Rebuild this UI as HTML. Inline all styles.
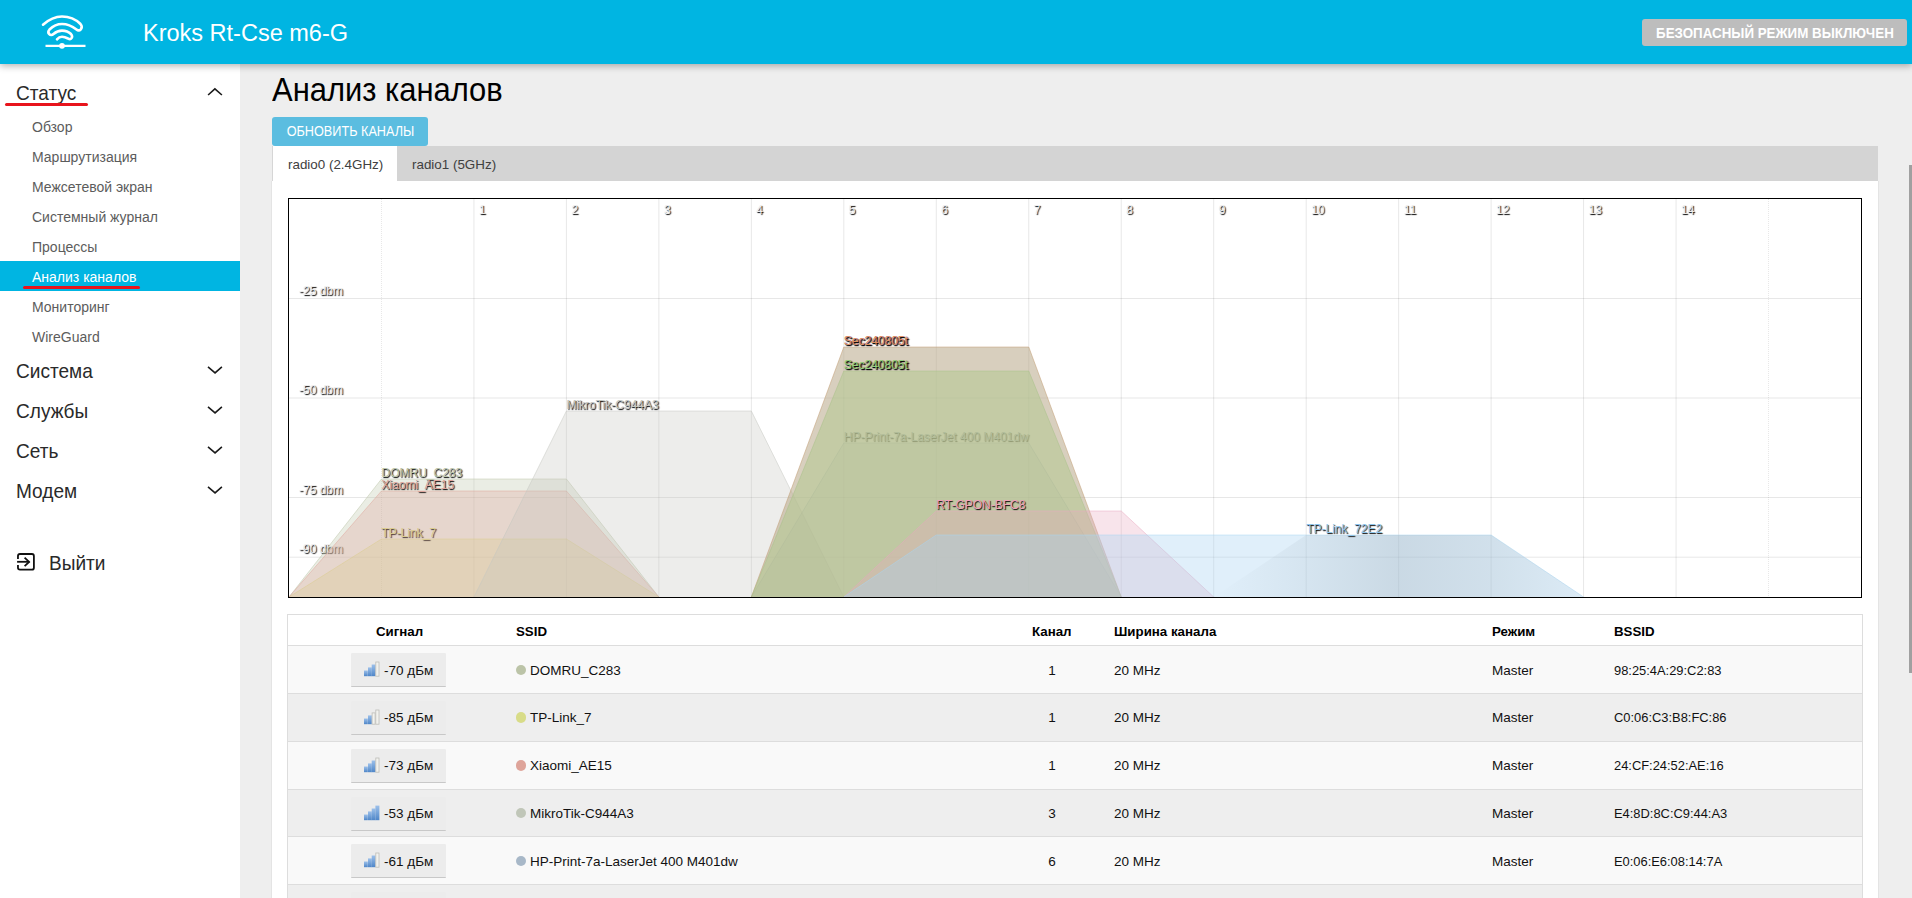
<!DOCTYPE html>
<html><head><meta charset="utf-8">
<style>
*{box-sizing:border-box;margin:0;padding:0}
html,body{width:1912px;height:898px;overflow:hidden;background:#eeeeee;font-family:"Liberation Sans",sans-serif;color:#333}
#hdr{position:absolute;left:0;top:0;width:1912px;height:64px;background:#00b5e2;z-index:5;box-shadow:0 2px 7px rgba(0,0,0,0.3)}
#hdr .title{position:absolute;left:143px;top:19px;font-size:23.5px;color:#fff;line-height:28px;white-space:nowrap}
#hdr .safe{position:absolute;left:1642px;top:19px;width:265px;height:27px;background:#bdbdbd;border-radius:3px;color:#fff;font-weight:bold;font-size:14.6px;line-height:28.5px;text-align:center;white-space:nowrap}
#hdr .safe span{display:inline-block;transform:scaleX(0.915);transform-origin:50% 50%}
#side{position:absolute;left:0;top:0;width:240px;height:898px;background:#fff}
.sec{position:absolute;left:16px;font-size:20.3px;color:#2a2a2a;line-height:22px;white-space:nowrap;transform:scaleX(0.94);transform-origin:0 0}
.sub{position:absolute;left:32px;font-size:14px;color:#5c5c5c;line-height:16px;white-space:nowrap}
.act{position:absolute;left:0;top:261px;width:240px;height:30px;background:#00b5e2}
.redline{position:absolute;height:3px;background:#e8141c;border-radius:2px}
.chev{position:absolute;left:206px}
#main{position:absolute;left:240px;top:64px;width:1672px;height:834px}
h2{position:absolute;left:272px;top:71.7px;font-size:32.4px;font-weight:normal;color:#000;line-height:36px;white-space:nowrap;transform:scaleX(0.955);transform-origin:0 0}
.btn{position:absolute;left:272px;top:117px;width:156px;height:29px;background:#5bbde0;border-radius:3px;color:#fff;font-size:14px;line-height:29px;text-align:center;white-space:nowrap}
.btn span{display:inline-block;transform:scaleX(0.905)}
.tabs{position:absolute;left:272px;top:146px;width:1606px;height:35px;background:#d4d4d4}
.tab{position:absolute;top:0;height:35px;font-size:13.4px;line-height:37px;color:#404040;white-space:nowrap}
.panel{position:absolute;left:271px;top:181px;width:1608px;height:717px;background:#fff;border-left:1px solid #e4e4e4;border-right:1px solid #e4e4e4}
#scroll{position:absolute;left:1909px;top:165px;width:3px;height:508px;background:#a0a0a0}

#cbox{position:absolute;left:288px;top:198px;width:1574px;height:400px;border:1px solid #000;background:#fff}
#chart{position:absolute;left:0;top:0}
.gl{fill:#eee;font-size:12px;font-family:"Liberation Sans",sans-serif;text-shadow:1px 1px 1px #000}
.lb{font-size:12px;font-family:"Liberation Sans",sans-serif;text-shadow:1px 1px 1px #000}

#tbl{position:absolute;left:287px;top:614px;width:1576px;height:400px;border:1px solid #dddddd;border-bottom:none;background:#fff;overflow:hidden}
.th{position:absolute;top:9px;font-size:13.3px;font-weight:bold;color:#000;line-height:16px;white-space:nowrap}
.tr{position:absolute;left:0;width:1574px;height:47.88px;border-top:1px solid #dddddd}
.td{position:absolute;top:16.5px;font-size:13.5px;color:#111;line-height:16px;white-space:nowrap}
.badge{position:absolute;left:63px;top:7px;width:95px;height:34px;background:#ececec;border-bottom:1.5px solid #c8c8c8;border-radius:1px}
.ico{position:absolute;left:12px;top:8px}
.sv{position:absolute;left:33px;top:9.5px;font-size:13.5px;color:#111;line-height:16px;white-space:nowrap}
.dot{position:absolute;left:228px;top:18.5px;width:10.4px;height:10.4px;border-radius:50%}
</style></head><body>
<div id="hdr">
  <svg style="position:absolute;left:0;top:0" width="100" height="64" viewBox="0 0 100 64">
    <g fill="none" stroke="#fff" stroke-width="2.6" stroke-linecap="round" stroke-linejoin="round">
      <path d="M43,24.7 C50,18.5 56,16.5 62,16.5 C70,16.5 76,19.5 80.5,24 C83.5,27.5 80,32.5 76.5,29.5 C72,26 67,24 62,24 C56.5,24 52.5,26.5 49.5,29.5 C46.5,33 50.5,37 53.5,34 C56,31.8 59,30.6 62,30.6 C66,30.6 69,32 71,34 C73.5,37 71,40.5 68,38.5 C66,37.5 64,36.8 62,36.8 C60,36.8 58.5,37.5 57,39.3"/>
      <path d="M45.5,45.8 H85.5" stroke-width="2.2" stroke-linecap="butt"/>
    </g>
    <circle cx="62" cy="45.8" r="2.9" fill="#fff"/>
  </svg>
  <div class="title">Kroks Rt-Cse m6-G</div>
  <div class="safe"><span>БЕЗОПАСНЫЙ РЕЖИМ ВЫКЛЮЧЕН</span></div>
</div>
<div id="side">
<div class="act"></div>
<div class="sec" style="top:81.67px">Статус</div>
<div class="sub" style="top:119.0px">Обзор</div>
<div class="sub" style="top:149.0px">Маршрутизация</div>
<div class="sub" style="top:179.0px">Межсетевой экран</div>
<div class="sub" style="top:209.0px">Системный журнал</div>
<div class="sub" style="top:239.0px">Процессы</div>
<div class="sub" style="top:269.0px;color:#fff">Анализ каналов</div>
<div class="sub" style="top:299.0px">Мониторинг</div>
<div class="sub" style="top:329.0px">WireGuard</div>
<div class="sec" style="top:359.97px">Система</div>
<svg class="chev" style="top:364.9px" width="18" height="11" viewBox="0 0 18 11"><path d="M2,1.9 L9.05,7.9 L15.9,1.9" fill="none" stroke="#1a1a1a" stroke-width="1.6"/></svg>
<div class="sec" style="top:399.97px">Службы</div>
<svg class="chev" style="top:404.9px" width="18" height="11" viewBox="0 0 18 11"><path d="M2,1.9 L9.05,7.9 L15.9,1.9" fill="none" stroke="#1a1a1a" stroke-width="1.6"/></svg>
<div class="sec" style="top:439.97px">Сеть</div>
<svg class="chev" style="top:444.9px" width="18" height="11" viewBox="0 0 18 11"><path d="M2,1.9 L9.05,7.9 L15.9,1.9" fill="none" stroke="#1a1a1a" stroke-width="1.6"/></svg>
<div class="sec" style="top:479.97px">Модем</div>
<svg class="chev" style="top:484.9px" width="18" height="11" viewBox="0 0 18 11"><path d="M2,1.9 L9.05,7.9 L15.9,1.9" fill="none" stroke="#1a1a1a" stroke-width="1.6"/></svg>
<svg class="chev" style="top:87px" width="18" height="11" viewBox="0 0 18 11"><path d="M2.1,8 L8.9,1.9 L15.9,8" fill="none" stroke="#1a1a1a" stroke-width="1.6"/></svg>
<div class="redline" style="left:5px;top:103px;width:83px"></div>
<div class="redline" style="left:23px;top:286px;width:117px"></div>
<svg style="position:absolute;left:16px;top:552px" width="20" height="20" viewBox="0 0 20 20"><g fill="none" stroke="#111" stroke-width="1.8"><path d="M1.96,6.9 V4 Q1.96,2 3.96,2 H15.9 Q17.9,2 17.9,4 V15.7 Q17.9,17.7 15.9,17.7 H3.96 Q1.96,17.7 1.96,15.7 V13.1"/><path d="M1.1,9.8 H13.4"/><path d="M8.6,5.6 L13.1,9.9 L8.6,14.2"/></g></svg>
<div class="sec" style="left:49px;top:551.77px">Выйти</div>
</div>
<h2>Анализ каналов</h2>
<div class="btn"><span>ОБНОВИТЬ КАНАЛЫ</span></div>
<div class="tabs">
  <div class="tab" style="left:0;width:125px;background:#fff;padding-left:15px;border-left:1px solid #d6d6d6">radio0 (2.4GHz)</div>
  <div class="tab" style="left:140px">radio1 (5GHz)</div>
</div>
<div class="panel"></div>
<div id="cbox"><svg id="chart" width="1572" height="398" viewBox="0 0 1572 398">
<g stroke="#000" stroke-width="0.1" shape-rendering="auto">
<line x1="0" y1="99.5" x2="1572" y2="99.5"/>
<line x1="0" y1="199" x2="1572" y2="199"/>
<line x1="0" y1="298.5" x2="1572" y2="298.5"/>
<line x1="0" y1="358.2" x2="1572" y2="358.2"/>
<line x1="92.47" y1="0" x2="92.47" y2="398" stroke-dasharray="1,1"/>
<line x1="184.94" y1="0" x2="184.94" y2="398"/>
<line x1="277.41" y1="0" x2="277.41" y2="398"/>
<line x1="369.88" y1="0" x2="369.88" y2="398"/>
<line x1="462.35" y1="0" x2="462.35" y2="398"/>
<line x1="554.82" y1="0" x2="554.82" y2="398"/>
<line x1="647.29" y1="0" x2="647.29" y2="398"/>
<line x1="739.76" y1="0" x2="739.76" y2="398"/>
<line x1="832.24" y1="0" x2="832.24" y2="398"/>
<line x1="924.71" y1="0" x2="924.71" y2="398"/>
<line x1="1017.18" y1="0" x2="1017.18" y2="398"/>
<line x1="1109.65" y1="0" x2="1109.65" y2="398"/>
<line x1="1202.12" y1="0" x2="1202.12" y2="398"/>
<line x1="1294.59" y1="0" x2="1294.59" y2="398"/>
<line x1="1387.06" y1="0" x2="1387.06" y2="398"/>
<line x1="1479.53" y1="0" x2="1479.53" y2="398" stroke-dasharray="1,1"/>
</g>
<text x="10" y="95.5" class="gl">-25 dbm</text>
<text x="10" y="195" class="gl">-50 dbm</text>
<text x="10" y="294.5" class="gl">-75 dbm</text>
<text x="10" y="354" class="gl">-90 dbm</text>
<text x="189.94" y="15" class="gl">1</text>
<text x="282.41" y="15" class="gl">2</text>
<text x="374.88" y="15" class="gl">3</text>
<text x="467.35" y="15" class="gl">4</text>
<text x="559.82" y="15" class="gl">5</text>
<text x="652.29" y="15" class="gl">6</text>
<text x="744.76" y="15" class="gl">7</text>
<text x="837.24" y="15" class="gl">8</text>
<text x="929.71" y="15" class="gl">9</text>
<text x="1022.18" y="15" class="gl">10</text>
<text x="1114.65" y="15" class="gl">11</text>
<text x="1207.12" y="15" class="gl">12</text>
<text x="1299.59" y="15" class="gl">13</text>
<text x="1392.06" y="15" class="gl">14</text>
<g>
<polyline points="0.00,398.00 92.47,280.00 277.41,280.00 369.88,398.00" style="fill:#bcc4a8;fill-opacity:0.31;stroke:#bcc4a8;stroke-width:0.5"/>
<text x="92.47" y="278.00" class="lb" style="fill:#bcc4a8">DOMRU_C283</text>
</g>
<g>
<polyline points="0.00,398.00 92.47,340.00 277.41,340.00 369.88,398.00" style="fill:#d8dc88;fill-opacity:0.31;stroke:#d8dc88;stroke-width:0.5"/>
<text x="92.47" y="338.00" class="lb" style="fill:#d8dc88">TP-Link_7</text>
</g>
<g>
<polyline points="0.00,398.00 92.47,292.00 277.41,292.00 369.88,398.00" style="fill:#dea49a;fill-opacity:0.31;stroke:#dea49a;stroke-width:0.5"/>
<text x="92.47" y="290.00" class="lb" style="fill:#dea49a">Xiaomi_AE15</text>
</g>
<g>
<polyline points="184.94,398.00 277.41,212.00 462.35,212.00 554.82,398.00" style="fill:#c4c6c0;fill-opacity:0.31;stroke:#c4c6c0;stroke-width:0.5"/>
<text x="277.41" y="210.00" class="lb" style="fill:#c4c6c0">MikroTik-C944A3</text>
</g>
<g>
<polyline points="462.35,398.00 554.82,244.00 739.76,244.00 832.24,398.00" style="fill:#a8b8c8;fill-opacity:0.25;stroke:#a8b8c8;stroke-width:0.5"/>
<text x="554.82" y="242.00" class="lb" style="fill:#a8b8c8">HP-Print-7a-LaserJet 400 M401dw</text>
</g>
<g>
<polyline points="462.35,398.00 554.82,148.00 739.76,148.00 832.24,398.00" style="fill:#b8a888;fill-opacity:0.55;stroke:#c09a70;stroke-width:0.5"/>
<text transform="translate(0.7,0)" x="554.82" y="146.00" class="lb" style="fill:#b080c0;opacity:0.9">Sec240805t</text>
<text x="554.82" y="146.00" class="lb" style="fill:#e09060">Sec240805t</text>
</g>
<g>
<polyline points="462.35,398.00 554.82,172.00 739.76,172.00 832.24,398.00" style="fill:#b2c890;fill-opacity:0.53;stroke:#a8c088;stroke-width:0.5"/>
<text transform="translate(0.7,0)" x="554.82" y="170.00" class="lb" style="fill:#c8b060;opacity:0.9">Sec240805t</text>
<text x="554.82" y="170.00" class="lb" style="fill:#90d080">Sec240805t</text>
</g>
<g>
<polyline points="554.82,398.00 647.29,312.00 832.24,312.00 924.71,398.00" style="fill:#e8a8c0;fill-opacity:0.31;stroke:#e8a8c0;stroke-width:0.5"/>
<text x="647.29" y="310.00" class="lb" style="fill:#f0a0b8">RT-GPON-BFC8</text>
</g>
<g>
<polyline points="554.82,398.00 647.29,336.00 1202.12,336.00 1294.59,398.00" style="fill:#a8d4f0;fill-opacity:0.36;stroke:#a8d4f0;stroke-width:0.5"/>
</g>
<defs><linearGradient id="g72" gradientUnits="userSpaceOnUse" x1="924.71" y1="0" x2="1294.59" y2="0"><stop offset="0" stop-color="#9aaab6" stop-opacity="0"/><stop offset="0.2" stop-color="#9aaab6" stop-opacity="0.12"/><stop offset="0.5" stop-color="#9aaab6" stop-opacity="0.32"/><stop offset="0.75" stop-color="#9aaab6" stop-opacity="0.22"/><stop offset="1" stop-color="#9aaab6" stop-opacity="0.06"/></linearGradient></defs>
<polyline points="924.71,398.00 1017.18,336.00 1202.12,336.00 1294.59,398.00" style="fill:url(#g72);stroke:none"/>
<text x="1017.18" y="334.00" class="lb" style="fill:#8cc4ec">TP-Link_72E2</text>
</svg></div>
<svg width="0" height="0" style="position:absolute"><defs><linearGradient id="gb" x1="0" y1="0" x2="0" y2="1"><stop offset="0" stop-color="#9cc0ea"/><stop offset="1" stop-color="#4f86c8"/></linearGradient></defs></svg>
<div id="tbl">
<div class="th" style="left:88px;width:46px;text-align:center">Сигнал</div>
<div class="th" style="left:228px">SSID</div>
<div class="th" style="left:744px">Канал</div>
<div class="th" style="left:826px">Ширина канала</div>
<div class="th" style="left:1204px">Режим</div>
<div class="th" style="left:1326px">BSSID</div>
<div class="tr" style="top:30.00px;background:#f9f9f9">
<div class="badge"><svg class="ico" width="17" height="16" viewBox="0 0 17 16"><rect x="1" y="9.5" width="3.8" height="5.7" fill="url(#gb)"/><rect x="5" y="6.4" width="3.8" height="8.8" fill="url(#gb)"/><rect x="8.7" y="3.5" width="3.8" height="11.7" fill="url(#gb)"/><rect x="12.8" y="1.0" width="3.2" height="14.2" fill="#f2f2ee" stroke="#bdbdb8" stroke-width="0.8"/></svg><span class="sv">-70 дБм</span></div>
<span class="dot" style="background:#bcc4a8"></span>
<div class="td" style="left:242px">DOMRU_C283</div>
<div class="td" style="left:744px;width:40px;text-align:center">1</div>
<div class="td" style="left:826px">20 MHz</div>
<div class="td" style="left:1204px">Master</div>
<div class="td" style="left:1326px;font-size:12.9px">98:25:4A:29:C2:83</div>
</div>
<div class="tr" style="top:77.86px;background:#eeeeee">
<div class="badge"><svg class="ico" width="17" height="16" viewBox="0 0 17 16"><rect x="1" y="9.5" width="3.8" height="5.7" fill="url(#gb)"/><rect x="5" y="6.4" width="3.8" height="8.8" fill="url(#gb)"/><rect x="9.1" y="3.9" width="3.0" height="11.3" fill="#f2f2ee" stroke="#bdbdb8" stroke-width="0.8"/><rect x="12.8" y="1.0" width="3.2" height="14.2" fill="#f2f2ee" stroke="#bdbdb8" stroke-width="0.8"/></svg><span class="sv">-85 дБм</span></div>
<span class="dot" style="background:#d8dc88"></span>
<div class="td" style="left:242px">TP-Link_7</div>
<div class="td" style="left:744px;width:40px;text-align:center">1</div>
<div class="td" style="left:826px">20 MHz</div>
<div class="td" style="left:1204px">Master</div>
<div class="td" style="left:1326px;font-size:12.9px">C0:06:C3:B8:FC:86</div>
</div>
<div class="tr" style="top:125.72px;background:#f9f9f9">
<div class="badge"><svg class="ico" width="17" height="16" viewBox="0 0 17 16"><rect x="1" y="9.5" width="3.8" height="5.7" fill="url(#gb)"/><rect x="5" y="6.4" width="3.8" height="8.8" fill="url(#gb)"/><rect x="8.7" y="3.5" width="3.8" height="11.7" fill="url(#gb)"/><rect x="12.8" y="1.0" width="3.2" height="14.2" fill="#f2f2ee" stroke="#bdbdb8" stroke-width="0.8"/></svg><span class="sv">-73 дБм</span></div>
<span class="dot" style="background:#dea49a"></span>
<div class="td" style="left:242px">Xiaomi_AE15</div>
<div class="td" style="left:744px;width:40px;text-align:center">1</div>
<div class="td" style="left:826px">20 MHz</div>
<div class="td" style="left:1204px">Master</div>
<div class="td" style="left:1326px;font-size:12.9px">24:CF:24:52:AE:16</div>
</div>
<div class="tr" style="top:173.58px;background:#eeeeee">
<div class="badge"><svg class="ico" width="17" height="16" viewBox="0 0 17 16"><rect x="1" y="9.5" width="3.8" height="5.7" fill="url(#gb)"/><rect x="5" y="6.4" width="3.8" height="8.8" fill="url(#gb)"/><rect x="8.7" y="3.5" width="3.8" height="11.7" fill="url(#gb)"/><rect x="12.4" y="0.6" width="4.0" height="14.6" fill="url(#gb)"/></svg><span class="sv">-53 дБм</span></div>
<span class="dot" style="background:#c0c6b8"></span>
<div class="td" style="left:242px">MikroTik-C944A3</div>
<div class="td" style="left:744px;width:40px;text-align:center">3</div>
<div class="td" style="left:826px">20 MHz</div>
<div class="td" style="left:1204px">Master</div>
<div class="td" style="left:1326px;font-size:12.9px">E4:8D:8C:C9:44:A3</div>
</div>
<div class="tr" style="top:221.44px;background:#f9f9f9">
<div class="badge"><svg class="ico" width="17" height="16" viewBox="0 0 17 16"><rect x="1" y="9.5" width="3.8" height="5.7" fill="url(#gb)"/><rect x="5" y="6.4" width="3.8" height="8.8" fill="url(#gb)"/><rect x="8.7" y="3.5" width="3.8" height="11.7" fill="url(#gb)"/><rect x="12.8" y="1.0" width="3.2" height="14.2" fill="#f2f2ee" stroke="#bdbdb8" stroke-width="0.8"/></svg><span class="sv">-61 дБм</span></div>
<span class="dot" style="background:#a8b8c8"></span>
<div class="td" style="left:242px">HP-Print-7a-LaserJet 400 M401dw</div>
<div class="td" style="left:744px;width:40px;text-align:center">6</div>
<div class="td" style="left:826px">20 MHz</div>
<div class="td" style="left:1204px">Master</div>
<div class="td" style="left:1326px;font-size:12.9px">E0:06:E6:08:14:7A</div>
</div>
<div class="tr" style="top:269.30px;background:#eeeeee">
<div class="badge"><svg class="ico" width="17" height="16" viewBox="0 0 17 16"><rect x="1" y="9.5" width="3.8" height="5.7" fill="url(#gb)"/><rect x="5" y="6.4" width="3.8" height="8.8" fill="url(#gb)"/><rect x="8.7" y="3.5" width="3.8" height="11.7" fill="url(#gb)"/><rect x="12.4" y="0.6" width="4.0" height="14.6" fill="url(#gb)"/></svg><span class="sv">-37 дБм</span></div>
<span class="dot" style="background:#c8a070"></span>
<div class="td" style="left:242px">Sec240805t</div>
<div class="td" style="left:744px;width:40px;text-align:center">6</div>
<div class="td" style="left:826px">20 MHz</div>
<div class="td" style="left:1204px">Master</div>
<div class="td" style="left:1326px;font-size:12.9px">E0:06:E6:08:14:7B</div>
</div>
</div>
<div id="scroll"></div>
</body></html>
